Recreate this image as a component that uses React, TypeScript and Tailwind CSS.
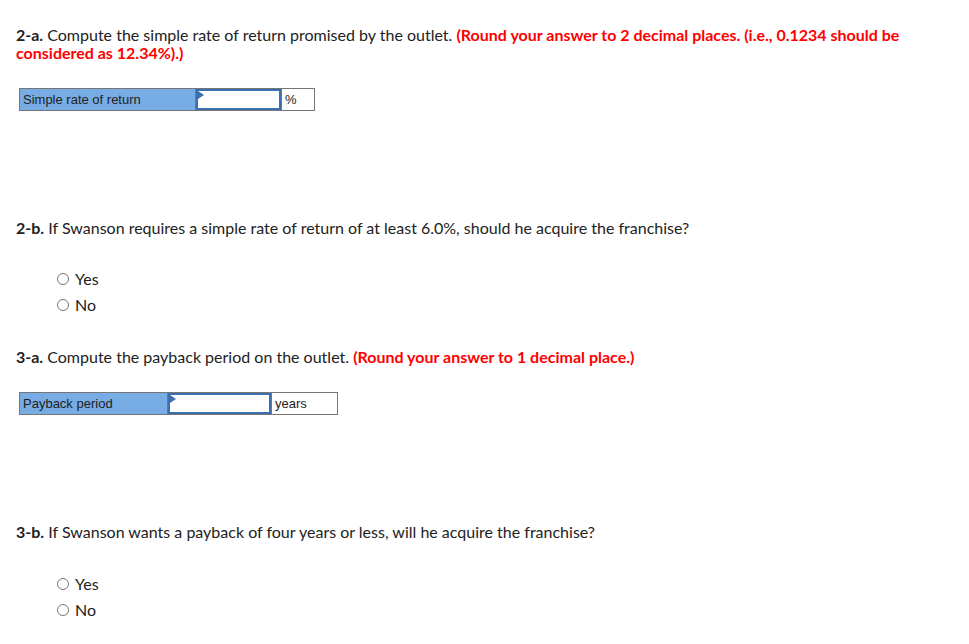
import React from "react";

const font = { fontFamily: "Lato, 'Open Sans', sans-serif" };

const AnswerRow = ({
  label,
  unit,
  labelW,
  inputW,
  unitW,
}: {
  label: string;
  unit: string;
  labelW: string;
  inputW: string;
  unitW: string;
}) => (
  <div className="flex h-[23px] border border-[#767676] font-['Liberation_Sans',Arial,sans-serif] text-[13px] text-[#222] w-fit">
    <div className={`${labelW} bg-[#78ace4] flex items-center pl-[3px] border-r border-[#767676]`}>
      {label}
    </div>
    <div className={`${inputW} relative bg-white border-2 border-[#3b6fb0]`}>
      <div className="absolute left-0 top-0 w-0 h-0 border-t-[4px] border-b-[4px] border-l-[6px] border-t-transparent border-b-transparent border-l-[#3b6fb0]" />
    </div>
    <div className={`${unitW} bg-white flex items-center pl-[3px] border-l border-[#767676]`}>
      {unit}
    </div>
  </div>
);

const Radios = () => (
  <div className="flex flex-col gap-[8px] pl-[41px] text-[16px] text-[#222]">
    {["Yes", "No"].map((o) => (
      <label key={o} className="flex items-center gap-[6px] h-[18px]">
        <span className="w-[12px] h-[12px] rounded-full border border-[#777] bg-white" />
        {o}
      </label>
    ))}
  </div>
);

export default function App() {
  return (
    <div className="bg-white w-[969px] h-[644px] px-[16px] pt-[26px] text-[16px] text-[#222]" style={font}>
      <p className="leading-[18px]">
        <b>2-a.</b> Compute the simple rate of return promised by the outlet.{" "}
        <b className="text-[#ff0000]">
          (Round your answer to 2 decimal places. (i.e., 0.1234 should be
          <br />
          considered as 12.34%).)
        </b>
      </p>
      <div className="mt-[26px] pl-[3px]">
        <AnswerRow label="Simple rate of return" unit="%" labelW="w-[176px]" inputW="w-[85px]" unitW="w-[33px]" />
      </div>

      <p className="mt-[108px] leading-[18px]">
        <b>2-b.</b> If Swanson requires a simple rate of return of at least 6.0%, should he acquire the franchise?
      </p>
      <div className="mt-[33px]">
        <Radios />
      </div>

      <p className="mt-[34px] leading-[18px]">
        <b>3-a.</b> Compute the payback period on the outlet.{" "}
        <b className="text-[#ff0000]">(Round your answer to 1 decimal place.)</b>
      </p>
      <div className="mt-[26px] pl-[3px]">
        <AnswerRow label="Payback period" unit="years" labelW="w-[148px]" inputW="w-[103px]" unitW="w-[66px]" />
      </div>

      <p className="mt-[108px] leading-[18px]">
        <b>3-b.</b> If Swanson wants a payback of four years or less, will he acquire the franchise?
      </p>
      <div className="mt-[34px]">
        <Radios />
      </div>
    </div>
  );
}
